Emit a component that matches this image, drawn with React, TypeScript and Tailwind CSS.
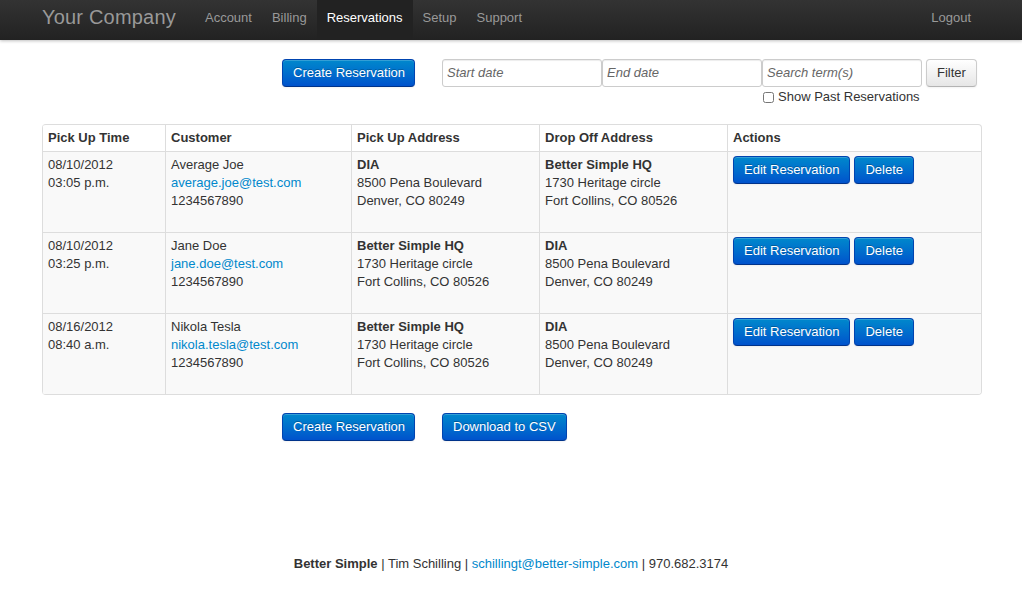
const navItems = ["Account", "Billing", "Reservations", "Setup", "Support"];

interface Place {
  name: string;
  street: string;
  city: string;
}

interface Reservation {
  date: string;
  time: string;
  name: string;
  email: string;
  phone: string;
  pickup: Place;
  dropoff: Place;
}

const dia: Place = { name: "DIA", street: "8500 Pena Boulevard", city: "Denver, CO 80249" };
const hq: Place = { name: "Better Simple HQ", street: "1730 Heritage circle", city: "Fort Collins, CO 80526" };

const reservations: Reservation[] = [
  { date: "08/10/2012", time: "03:05 p.m.", name: "Average Joe", email: "average.joe@test.com", phone: "1234567890", pickup: dia, dropoff: hq },
  { date: "08/10/2012", time: "03:25 p.m.", name: "Jane Doe", email: "jane.doe@test.com", phone: "1234567890", pickup: hq, dropoff: dia },
  { date: "08/16/2012", time: "08:40 a.m.", name: "Nikola Tesla", email: "nikola.tesla@test.com", phone: "1234567890", pickup: hq, dropoff: dia },
];

const btnPrimary =
  "h-[28px] px-[10px] rounded-[4px] text-[13px] leading-[18px] text-white bg-gradient-to-b from-[#0088cc] to-[#0052cc] border border-[#0044b0] border-b-[#00338a] shadow-[inset_0_1px_0_rgba(255,255,255,0.2),0_1px_2px_rgba(0,0,0,0.05)] [text-shadow:0_-1px_0_rgba(0,0,0,0.25)] whitespace-nowrap";

const inputCls =
  "w-[160px] h-[28px] px-[4px] pb-[1px] border border-[#ccc] rounded-[3px] text-[13px] text-[#555] bg-white shadow-[inset_0_1px_1px_rgba(0,0,0,0.075)] placeholder:italic placeholder:text-[#666] outline-none";

function Address({ p }: { p: Place }) {
  return (
    <>
      <div className="font-bold">{p.name}</div>
      <div>{p.street}</div>
      <div>{p.city}</div>
    </>
  );
}

export default function App() {
  const td = "align-top px-[5px] pt-[4px] border-t border-l border-[#ddd] h-[81px]";
  const th = "text-left font-bold px-[5px] py-[4px] border-l border-[#ddd] h-[26px]";
  return (
    <div className="min-h-[592px] bg-white text-[#333] text-[13px] leading-[18px] font-['Liberation_Sans',Arial,sans-serif] flex flex-col">
      <div className="h-[40px] bg-gradient-to-b from-[#333] to-[#222] shadow-[0_1px_3px_rgba(0,0,0,0.25)]">
        <div className="w-[940px] mx-auto flex items-stretch h-full">
          <a className="ml-[1px] text-[20px] leading-none text-[#999] pt-[7px] pr-[19px] tracking-[0.01em]">Your Company</a>
          <ul className="flex">
            {navItems.map((n) => (
              <li
                key={n}
                className={
                  "px-[10px] pt-[9px] " +
                  (n === "Reservations" ? "bg-[#222] text-white" : "text-[#999]")
                }
              >
                {n}
              </li>
            ))}
          </ul>
          <div className="ml-auto px-[10px] pt-[9px] text-[#999]">Logout</div>
        </div>
      </div>

      <div className="w-[940px] mx-auto flex-1 flex flex-col">
        <div className="flex mt-[19px]">
          <button className={btnPrimary + " ml-[241px] w-[133px]"}>Create Reservation</button>
          <div className="ml-[27px]">
            <div className="flex">
              <input className={inputCls} placeholder="Start date" />
              <input className={inputCls} placeholder="End date" />
              <input className={inputCls} placeholder="Search term(s)" />
              <button className="ml-[4px] h-[28px] px-[10px] rounded-[4px] border border-[#ccc] border-b-[#b3b3b3] bg-gradient-to-b from-white to-[#e6e6e6] text-[#333] shadow-[inset_0_1px_0_rgba(255,255,255,0.2),0_1px_2px_rgba(0,0,0,0.05)]">
                Filter
              </button>
            </div>
            <label className="flex items-center ml-[321px] mt-[1px]">
              <input type="checkbox" className="w-[11px] h-[11px] mr-[4px] accent-[#ccc]" />
              Show Past Reservations
            </label>
          </div>
        </div>

        <table className="mt-[18px] ml-[1px] w-[940px] table-fixed border-separate border-spacing-0 border border-l-0 border-[#ddd] rounded-[4px] overflow-hidden">
          <colgroup>
            <col className="w-[123px]" />
            <col className="w-[186px]" />
            <col className="w-[188px]" />
            <col className="w-[188px]" />
            <col />
          </colgroup>
          <thead>
            <tr>
              <th className={th}>Pick Up Time</th>
              <th className={th}>Customer</th>
              <th className={th}>Pick Up Address</th>
              <th className={th}>Drop Off Address</th>
              <th className={th}>Actions</th>
            </tr>
          </thead>
          <tbody>
            {reservations.map((r, i) => (
              <tr key={i} className="bg-[#f9f9f9]">
                <td className={td}>
                  <div>{r.date}</div>
                  <div>{r.time}</div>
                </td>
                <td className={td}>
                  <div>{r.name}</div>
                  <div className="text-[#0088cc]">{r.email}</div>
                  <div>{r.phone}</div>
                </td>
                <td className={td}>
                  <Address p={r.pickup} />
                </td>
                <td className={td}>
                  <Address p={r.dropoff} />
                </td>
                <td className={td}>
                  <div className="flex gap-[4px]">
                    <button className={btnPrimary}>Edit Reservation</button>
                    <button className={btnPrimary}>Delete</button>
                  </div>
                </td>
              </tr>
            ))}
          </tbody>
        </table>

        <div className="flex mt-[18px]">
          <button className={btnPrimary + " ml-[241px] w-[133px]"}>Create Reservation</button>
          <button className={btnPrimary + " ml-[27px]"}>Download to CSV</button>
        </div>

        <div className="mt-auto mb-[19px] text-center">
          <span className="font-bold">Better Simple</span> | Tim Schilling |{" "}
          <a className="text-[#0088cc]">schillingt@better-simple.com</a> | 970.682.3174
        </div>
      </div>
    </div>
  );
}
